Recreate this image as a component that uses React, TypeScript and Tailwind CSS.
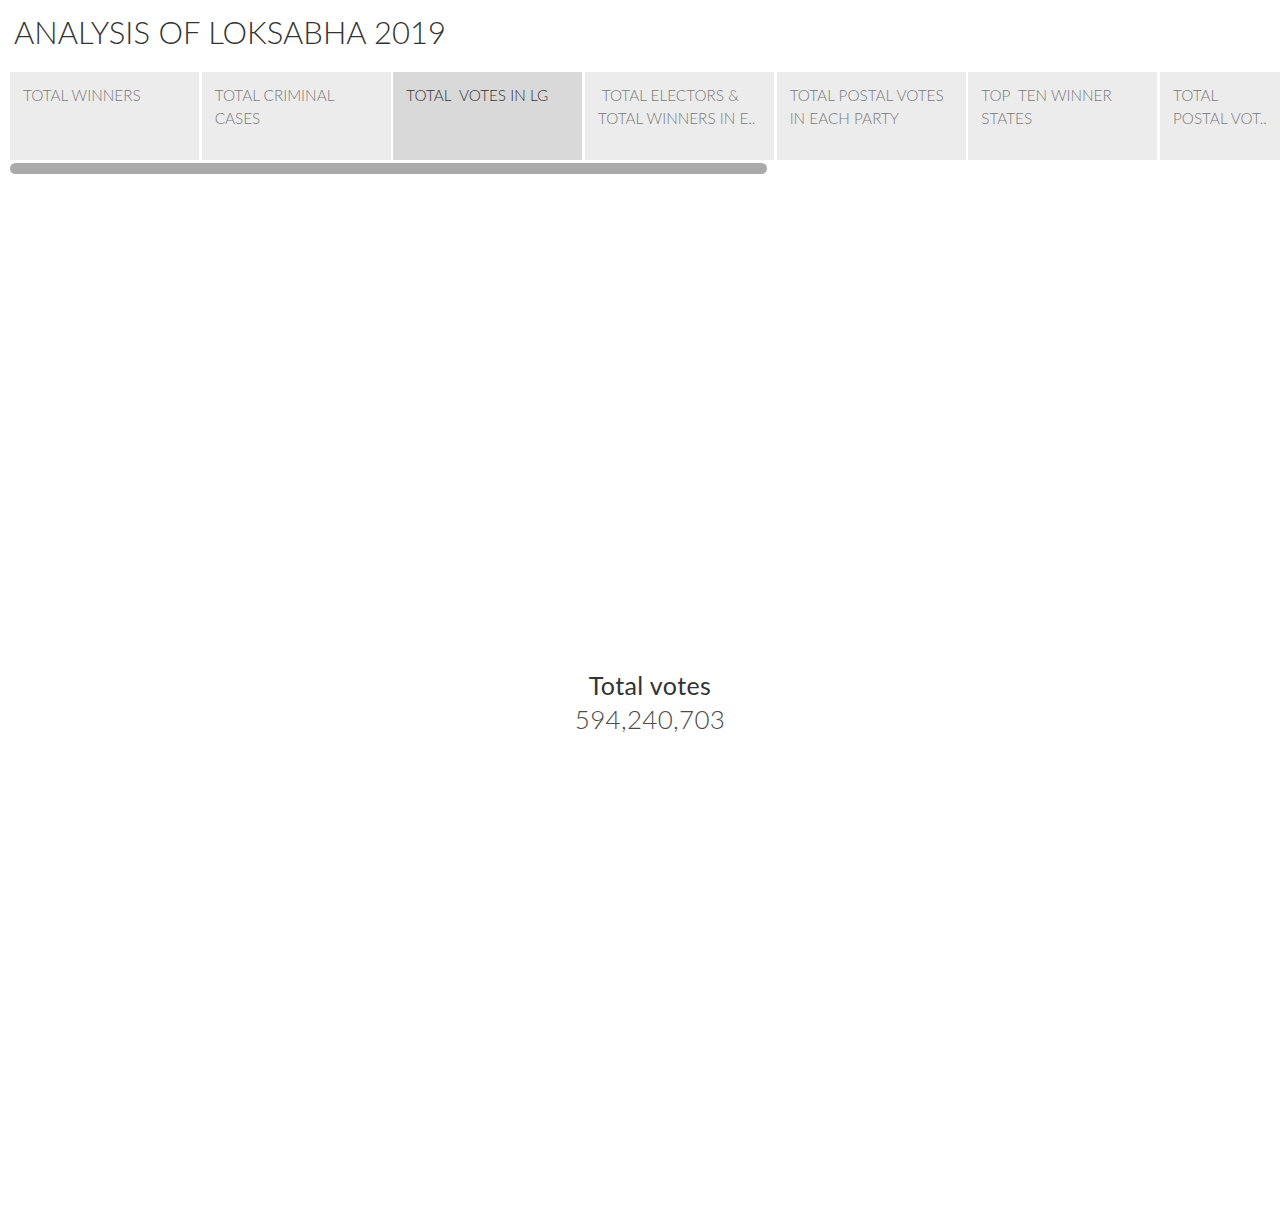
const tabs = [
  { lines: ['TOTAL WINNERS'] },
  { lines: ['TOTAL CRIMINAL', 'CASES'] },
  { lines: ['TOTAL\u00a0 VOTES IN LG'], active: true },
  { lines: ['\u00a0TOTAL ELECTORS &', 'TOTAL WINNERS IN E..'] },
  { lines: ['TOTAL POSTAL VOTES', 'IN EACH PARTY'] },
  { lines: ['TOP\u00a0 TEN WINNER', 'STATES'] },
  { lines: ['TOTAL', 'POSTAL VOT..'] },
]

export default function App() {
  return (
    <div
      className="flex h-[1214px] w-[1280px] flex-col overflow-hidden bg-white"
      style={{ fontFamily: 'Lato, "Open Sans", sans-serif' }}
    >
      <div className="flex h-[72px] items-center px-[14px] pb-[8px]">
        <h1 className="text-[31px] font-light leading-none text-[#333]">ANALYSIS OF LOKSABHA 2019</h1>
      </div>

      <div className="pl-[10px]">
        <div className="flex gap-[2.67px] overflow-hidden">
          {tabs.map((t, i) => (
            <div
              key={i}
              className={`h-[88px] w-[189px] shrink-0 px-[13px] pt-[12px] ${
                t.active ? 'bg-[#d9d9d9] text-[#333]' : 'bg-[#ececec] text-[#7a7a7a]'
              }`}
            >
              {t.lines.map((l, j) => (
                <p key={j} className="whitespace-pre text-[15.3px] font-light leading-[23px]">
                  {l}
                </p>
              ))}
            </div>
          ))}
        </div>
        <div className="mt-[3px] h-[11px] w-[757px] rounded-full bg-[#aaaaaa]" />
      </div>

      <div className="flex flex-1 flex-col items-center justify-center pt-[16px] pl-[20px]">
        <div className="text-[25px] leading-[34px] tracking-[0.4px] text-[#333]">Total votes</div>
        <div className="text-[26px] font-light leading-[34px] tracking-[0.3px] text-[#4a4a4a]">594,240,703</div>
      </div>
    </div>
  )
}
